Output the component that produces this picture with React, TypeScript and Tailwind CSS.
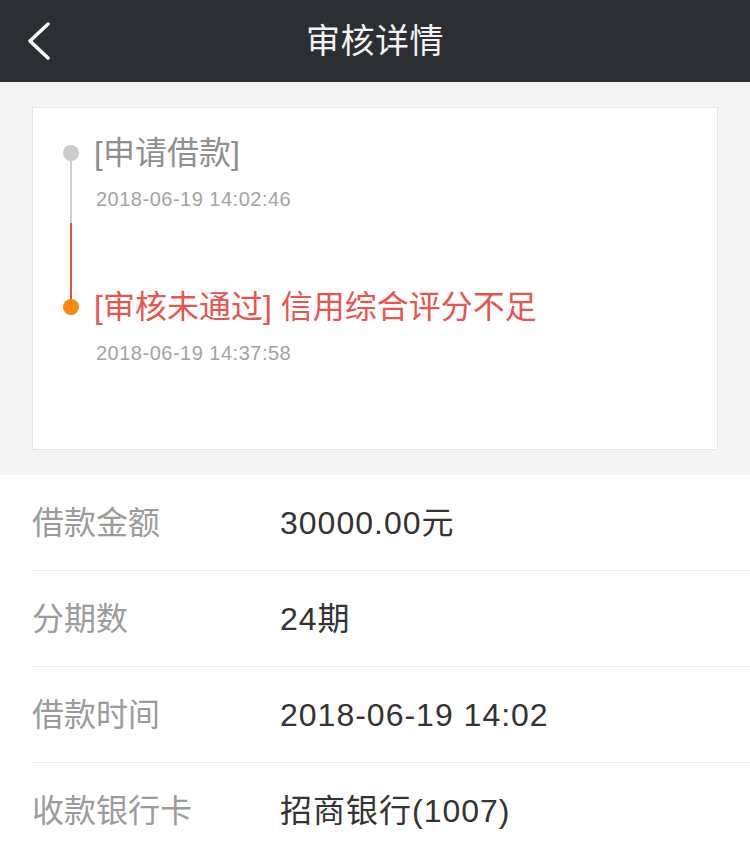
const font = "font-['Liberation_Sans','Noto_Sans_CJK_SC',sans-serif]"

const rows = [
  { label: "借款金额", value: "30000.00元" },
  { label: "分期数", value: "24期" },
  { label: "借款时间", value: "2018-06-19 14:02" },
  { label: "收款银行卡", value: "招商银行(1007)" },
]

function Header() {
  return (
    <header className="grid h-[82px] grid-cols-[1fr_auto_1fr] items-center bg-[#2b2e33]">
      <div className="flex items-center">
        <svg className="ml-[27px] h-[38px] w-[24px]" viewBox="0 0 24 38" fill="none">
          <polyline points="21,2 3,19 21,36" stroke="#ffffff" strokeWidth="3.5" strokeLinecap="round" strokeLinejoin="round" />
        </svg>
      </div>
      <h1 className="text-[34px] leading-none tracking-[0.5px] text-[#f2f2f2]">审核详情</h1>
      <div />
    </header>
  )
}

function Timeline() {
  return (
    <div className="mx-8 h-[343px] border border-[#e6e6e6] bg-white pt-[25px]">
      <div className="relative">
        {/* connector */}
        <div className="absolute left-[37px] top-[20px] h-[70px] w-[2px] bg-[#cfcfcf]" />
        <div className="absolute left-[37px] top-[90px] h-[84px] w-[2px] bg-[#e0553f]" />

        <div className="flex h-10 items-center gap-[15px] pl-[30px]">
          <span className="relative h-4 w-4 rounded-full bg-[#cccccc]" />
          <p className="text-[32px] leading-10 text-[#8f8f8f]">[申请借款]</p>
        </div>
        <p className="mt-3 pl-[63px] text-[20px] leading-7 tracking-[0.5px] text-[#a3a3a3]">2018-06-19 14:02:46</p>

        <div className="mt-[74px] flex h-10 items-center gap-[15px] pl-[30px]">
          <span className="relative h-4 w-4 rounded-full bg-[#f7890c]" />
          <p className="text-[32px] leading-10 text-[#e8544e]">[审核未通过] 信用综合评分不足</p>
        </div>
        <p className="mt-3 pl-[63px] text-[20px] leading-7 tracking-[0.5px] text-[#a3a3a3]">2018-06-19 14:37:58</p>
      </div>
    </div>
  )
}

export default function App() {
  return (
    <div className={`min-h-[859px] w-[750px] bg-white ${font}`}>
      <Header />
      <section className="h-[393px] bg-[#f4f4f4] pt-[25px]">
        <Timeline />
      </section>
      <ul className="pl-8">
        {rows.map((row, i) => (
          <li
            key={row.label}
            className={`flex h-[96px] items-center ${i < rows.length - 1 ? "border-b border-[#ebebeb]" : ""}`}
          >
            <span className="w-[248px] text-[32px] text-[#9b9b9b]">{row.label}</span>
            <span className="text-[32px] tracking-[1px] text-[#333333]">{row.value}</span>
          </li>
        ))}
      </ul>
    </div>
  )
}
